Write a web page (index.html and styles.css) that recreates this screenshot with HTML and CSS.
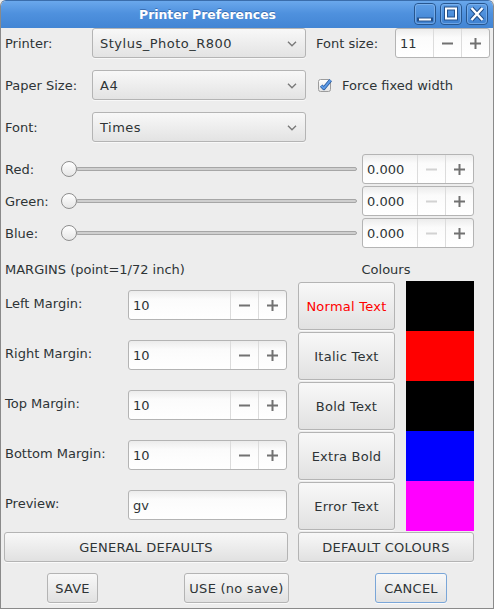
FILE: index.html
```html
<!DOCTYPE html>
<html>
<head>
<meta charset="utf-8">
<title>Printer Preferences</title>
<link rel="stylesheet" href="styles.css">
</head>
<body>
<div class="window">
  <div class="titlebar">
    <div class="title">Printer Preferences</div>
    <div class="wm-buttons">
      <svg class="wm-btn" width="22" height="22" viewBox="0 0 22 22">
        <defs><linearGradient id="wg" x1="0" y1="0" x2="0" y2="1"><stop offset="0" stop-color="#5e9fe7"/><stop offset="1" stop-color="#3d80d0"/></linearGradient></defs>
        <rect x="0.5" y="0.5" width="21" height="21" rx="3.5" fill="url(#wg)" stroke="#27568f"/>
        <rect x="1.5" y="1.5" width="19" height="19" rx="2.5" fill="none" stroke="#8dbdf0" stroke-opacity="0.6"/>
        <path d="M5 16.5H17" stroke="#24508a" stroke-width="4" stroke-linecap="square"/>
        <path d="M5 16.5H17" stroke="#ffffff" stroke-width="2"/>
      </svg>
      <svg class="wm-btn" width="22" height="22" viewBox="0 0 22 22">
        <rect x="0.5" y="0.5" width="21" height="21" rx="3.5" fill="url(#wg)" stroke="#27568f"/>
        <rect x="1.5" y="1.5" width="19" height="19" rx="2.5" fill="none" stroke="#8dbdf0" stroke-opacity="0.6"/>
        <rect x="6" y="5.5" width="10" height="10" fill="none" stroke="#24508a" stroke-width="4"/>
        <rect x="6" y="5.5" width="10" height="10" fill="none" stroke="#ffffff" stroke-width="2"/>
      </svg>
      <svg class="wm-btn" width="22" height="22" viewBox="0 0 22 22">
        <rect x="0.5" y="0.5" width="21" height="21" rx="3.5" fill="url(#wg)" stroke="#27568f"/>
        <rect x="1.5" y="1.5" width="19" height="19" rx="2.5" fill="none" stroke="#8dbdf0" stroke-opacity="0.6"/>
        <path d="M5.5 5L16.5 17M16.5 5L5.5 17" stroke="#24508a" stroke-width="4.5"/>
        <path d="M5.5 5L16.5 17M16.5 5L5.5 17" stroke="#ffffff" stroke-width="2.4"/>
      </svg>
    </div>
  </div>

  <div class="content">
    <div class="row">
      <span class="lbl lbl-main">Printer:</span>
      <div class="combo"><span class="combo-text">Stylus_Photo_R800</span><svg class="chev" width="10" height="6" viewBox="0 0 10 6"><path d="M1 0.8L5 4.8L9 0.8" fill="none" stroke="#7b7b7b" stroke-width="1.4"/></svg></div>
      <span class="lbl lbl-fs">Font size:</span>
      <div class="spin spin-fs">
        <span class="spin-val">11</span>
        <span class="spin-btn"><svg width="11" height="11" viewBox="0 0 11 11"><path d="M0 5.5H11" stroke="currentColor" stroke-width="2"/></svg></span>
        <span class="spin-btn"><svg width="11" height="11" viewBox="0 0 11 11"><path d="M0 5.5H11M5.5 0V11" stroke="currentColor" stroke-width="2"/></svg></span>
      </div>
    </div>

    <div class="row row-gap">
      <span class="lbl lbl-main">Paper Size:</span>
      <div class="combo"><span class="combo-text">A4</span><svg class="chev" width="10" height="6" viewBox="0 0 10 6"><path d="M1 0.8L5 4.8L9 0.8" fill="none" stroke="#7b7b7b" stroke-width="1.4"/></svg></div>
      <label class="check">
        <svg width="15" height="15" viewBox="0 0 15 15">
          <defs><linearGradient id="cg" x1="0" y1="0" x2="0" y2="1"><stop offset="0" stop-color="#ffffff"/><stop offset="1" stop-color="#e2e2e2"/></linearGradient></defs>
          <rect x="0.5" y="2.5" width="12" height="12" rx="2" fill="url(#cg)" stroke="#9c9c9c"/>
          <path d="M3.2 8.6L5.8 11.4L12.6 3.2" fill="none" stroke="#2b5c9e" stroke-width="3.6" stroke-linejoin="round"/>
          <path d="M3.2 8.6L5.8 11.4L12.6 3.2" fill="none" stroke="#5d9ae6" stroke-width="2" stroke-linejoin="round"/>
        </svg>
        <span>Force fixed width</span>
      </label>
    </div>

    <div class="row row-gap">
      <span class="lbl lbl-main">Font:</span>
      <div class="combo"><span class="combo-text">Times</span><svg class="chev" width="10" height="6" viewBox="0 0 10 6"><path d="M1 0.8L5 4.8L9 0.8" fill="none" stroke="#7b7b7b" stroke-width="1.4"/></svg></div>
    </div>

    <div class="srow srow-first">
      <span class="lbl slbl">Red:</span>
      <div class="slider"><span class="knob"></span><span class="track"></span></div>
      <div class="spin spin-rgb">
        <span class="spin-val">0.000</span>
        <span class="spin-btn dis"><svg width="11" height="11" viewBox="0 0 11 11"><path d="M0 5.5H11" stroke="currentColor" stroke-width="2"/></svg></span>
        <span class="spin-btn"><svg width="11" height="11" viewBox="0 0 11 11"><path d="M0 5.5H11M5.5 0V11" stroke="currentColor" stroke-width="2"/></svg></span>
      </div>
    </div>
    <div class="srow">
      <span class="lbl slbl">Green:</span>
      <div class="slider"><span class="knob"></span><span class="track"></span></div>
      <div class="spin spin-rgb">
        <span class="spin-val">0.000</span>
        <span class="spin-btn dis"><svg width="11" height="11" viewBox="0 0 11 11"><path d="M0 5.5H11" stroke="currentColor" stroke-width="2"/></svg></span>
        <span class="spin-btn"><svg width="11" height="11" viewBox="0 0 11 11"><path d="M0 5.5H11M5.5 0V11" stroke="currentColor" stroke-width="2"/></svg></span>
      </div>
    </div>
    <div class="srow">
      <span class="lbl slbl">Blue:</span>
      <div class="slider"><span class="knob"></span><span class="track"></span></div>
      <div class="spin spin-rgb">
        <span class="spin-val">0.000</span>
        <span class="spin-btn dis"><svg width="11" height="11" viewBox="0 0 11 11"><path d="M0 5.5H11" stroke="currentColor" stroke-width="2"/></svg></span>
        <span class="spin-btn"><svg width="11" height="11" viewBox="0 0 11 11"><path d="M0 5.5H11M5.5 0V11" stroke="currentColor" stroke-width="2"/></svg></span>
      </div>
    </div>

    <div class="mhead">
      <span class="mhead-l">MARGINS (point=1/72 inch)</span>
      <span class="mhead-r">Colours</span>
    </div>

    <div class="mgrid">
      <div class="mcell"><span class="lbl mlbl">Left Margin:</span>
        <div class="spin spin-m"><span class="spin-val">10</span>
          <span class="spin-btn"><svg width="11" height="11" viewBox="0 0 11 11"><path d="M0 5.5H11" stroke="currentColor" stroke-width="2"/></svg></span>
          <span class="spin-btn"><svg width="11" height="11" viewBox="0 0 11 11"><path d="M0 5.5H11M5.5 0V11" stroke="currentColor" stroke-width="2"/></svg></span>
        </div>
      </div>
      <div class="btn cbtn red-text">Normal Text</div>
      <div class="swatch sw-black"></div>

      <div class="mcell"><span class="lbl mlbl">Right Margin:</span>
        <div class="spin spin-m"><span class="spin-val">10</span>
          <span class="spin-btn"><svg width="11" height="11" viewBox="0 0 11 11"><path d="M0 5.5H11" stroke="currentColor" stroke-width="2"/></svg></span>
          <span class="spin-btn"><svg width="11" height="11" viewBox="0 0 11 11"><path d="M0 5.5H11M5.5 0V11" stroke="currentColor" stroke-width="2"/></svg></span>
        </div>
      </div>
      <div class="btn cbtn">Italic Text</div>
      <div class="swatch sw-red"></div>

      <div class="mcell"><span class="lbl mlbl">Top Margin:</span>
        <div class="spin spin-m"><span class="spin-val">10</span>
          <span class="spin-btn"><svg width="11" height="11" viewBox="0 0 11 11"><path d="M0 5.5H11" stroke="currentColor" stroke-width="2"/></svg></span>
          <span class="spin-btn"><svg width="11" height="11" viewBox="0 0 11 11"><path d="M0 5.5H11M5.5 0V11" stroke="currentColor" stroke-width="2"/></svg></span>
        </div>
      </div>
      <div class="btn cbtn">Bold Text</div>
      <div class="swatch sw-black"></div>

      <div class="mcell"><span class="lbl mlbl">Bottom Margin:</span>
        <div class="spin spin-m"><span class="spin-val">10</span>
          <span class="spin-btn"><svg width="11" height="11" viewBox="0 0 11 11"><path d="M0 5.5H11" stroke="currentColor" stroke-width="2"/></svg></span>
          <span class="spin-btn"><svg width="11" height="11" viewBox="0 0 11 11"><path d="M0 5.5H11M5.5 0V11" stroke="currentColor" stroke-width="2"/></svg></span>
        </div>
      </div>
      <div class="btn cbtn">Extra Bold</div>
      <div class="swatch sw-blue"></div>

      <div class="mcell"><span class="lbl mlbl">Preview:</span>
        <div class="entry">gv</div>
      </div>
      <div class="btn cbtn">Error Text</div>
      <div class="swatch sw-magenta"></div>
    </div>

    <div class="drow">
      <div class="btn btn-gen">GENERAL DEFAULTS</div>
      <div class="btn btn-dcol">DEFAULT COLOURS</div>
    </div>

    <div class="brow">
      <div class="btn btn-save">SAVE</div>
      <div class="btn btn-use">USE (no save)</div>
      <div class="btn btn-cancel">CANCEL</div>
    </div>
  </div>
</div>
</body>
</html>
```

FILE: styles.css
```css
* { box-sizing: border-box; }
html, body { margin: 0; padding: 0; }
body {
  width: 494px;
  height: 609px;
  overflow: hidden;
  background: #ededed;
  font-family: "DejaVu Sans", sans-serif;
  font-size: 13px;
  color: #2e3436;
}
.window {
  width: 494px;
  height: 609px;
  border: 1px solid #8a8a8a;
  border-top-color: #3a6dab;
  border-radius: 6px 6px 0 0;
  background: #ededed;
  overflow: hidden;
  display: flex;
  flex-direction: column;
}
.titlebar {
  flex: none;
  height: 27px;
  display: flex;
  background: linear-gradient(#6aa8ec 0, #4f91de 45%, #4285d4 100%);
}
.title {
  flex: 1;
  text-align: center;
  line-height: 27px;
  font-weight: bold;
  font-size: 12.4px;
  color: #ffffff;
  text-shadow: 0 -1px 0 rgba(30, 70, 130, 0.5);
}
.wm-buttons {
  display: flex;
  gap: 4px;
  padding: 2px 5px 0 0;
}
.wm-btn { display: block; }

.content { flex: 1; }

.row {
  display: flex;
  align-items: center;
  height: 30px;
  padding-left: 4px;
}
.row-gap { margin-top: 12px; }
.lbl { white-space: nowrap; }
.lbl-main { width: 87px; flex: none; }
.lbl-fs { width: 79px; margin-left: 10px; flex: none; }

.combo {
  width: 214px;
  height: 30px;
  flex: none;
  display: flex;
  align-items: center;
  justify-content: space-between;
  padding: 0 8px 0 7px;
  border: 1px solid #b4b4b4;
  border-radius: 3px;
  background: linear-gradient(#f8f8f8, #e3e3e3);
  box-shadow: 0 1px 0 rgba(255,255,255,0.6);
}
.combo-text { letter-spacing: 0.5px; }
.chev { display: block; margin-top: 1px; }

.spin {
  height: 30px;
  flex: none;
  display: flex;
  border: 1px solid #b4b4b4;
  border-radius: 3px;
  background: linear-gradient(#ececec 0, #fbfbfb 30%, #ffffff 100%);
}
.spin-val {
  flex: 1;
  display: flex;
  align-items: center;
  padding-left: 4px;
}
.spin-btn {
  width: 28px;
  flex: none;
  display: flex;
  align-items: center;
  justify-content: center;
  border-left: 1px solid #dcdcdc;
  color: #717171;
}
.spin-btn svg { display: block; }
.spin-btn.dis { color: #d2d2d2; }
.spin-fs { width: 95px; }
.spin-rgb { width: 112px; margin-left: 4px; }
.spin-m { width: 159px; }

.check {
  display: flex;
  align-items: center;
  margin-left: 12px;
  gap: 9px;
}
.check svg { display: block; margin-top: -1px; }

.srow {
  display: flex;
  align-items: center;
  height: 30px;
  padding-left: 4px;
  margin-top: 2px;
}
.srow-first { margin-top: 12px; }
.slbl { width: 56px; flex: none; }
.slider {
  width: 297px;
  flex: none;
  display: flex;
  align-items: center;
}
.knob {
  width: 16px;
  height: 16px;
  flex: none;
  border-radius: 50%;
  border: 1px solid #8e8e8e;
  background: linear-gradient(#ffffff, #e6e6e6);
  position: relative;
  z-index: 1;
}
.track {
  flex: 1;
  height: 4px;
  margin-left: -1px;
  margin-right: 1px;
  border: 1px solid #a6a6a6;
  border-radius: 2px;
  background: #cfcfcf;
}

.mhead {
  display: flex;
  height: 16px;
  line-height: 16px;
  margin-top: 14px;
  padding-left: 4px;
}
.mhead-l { width: 293px; flex: none; }
.mhead-r { width: 176px; text-align: center; }

.mgrid {
  display: grid;
  grid-template-columns: 282px 97px 68px;
  grid-auto-rows: 50px;
  column-gap: 11px;
  margin-top: 3px;
  padding-left: 4px;
}
.mcell {
  display: flex;
  align-items: center;
  padding-bottom: 2px;
}
.mlbl { width: 123px; flex: none; padding-bottom: 4px; }

.entry {
  width: 159px;
  height: 30px;
  display: flex;
  align-items: center;
  padding-left: 4px;
  border: 1px solid #b4b4b4;
  border-radius: 3px;
  background: linear-gradient(#ececec 0, #fbfbfb 30%, #ffffff 100%);
}

.btn {
  height: 30px;
  display: flex;
  align-items: center;
  justify-content: center;
  white-space: nowrap;
  letter-spacing: 0.25px;
  border: 1px solid #b4b4b4;
  border-radius: 3px;
  background: linear-gradient(#f8f8f8, #e1e1e1);
  box-shadow: 0 1px 0 rgba(255,255,255,0.7);
}
.cbtn {
  height: 48px;
  margin-top: 1px;
}
.red-text { color: #ff0000; }

.swatch { width: 68px; height: 50px; }
.sw-black { background: #000000; }
.sw-red { background: #ff0000; }
.sw-blue { background: #0000ff; }
.sw-magenta { background: #ff00ff; }

.drow {
  display: flex;
  margin-top: 1px;
  padding-left: 3px;
}
.btn-gen { width: 284px; }
.btn-dcol { width: 176px; margin-left: 10px; }

.brow {
  display: flex;
  margin-top: 11px;
}
.btn-save { width: 51px; margin-left: 46px; }
.btn-use { width: 105px; margin-left: 86px; }
.btn-cancel {
  width: 72px;
  margin-left: 86px;
  border-color: #7aa6d8;
}
```
